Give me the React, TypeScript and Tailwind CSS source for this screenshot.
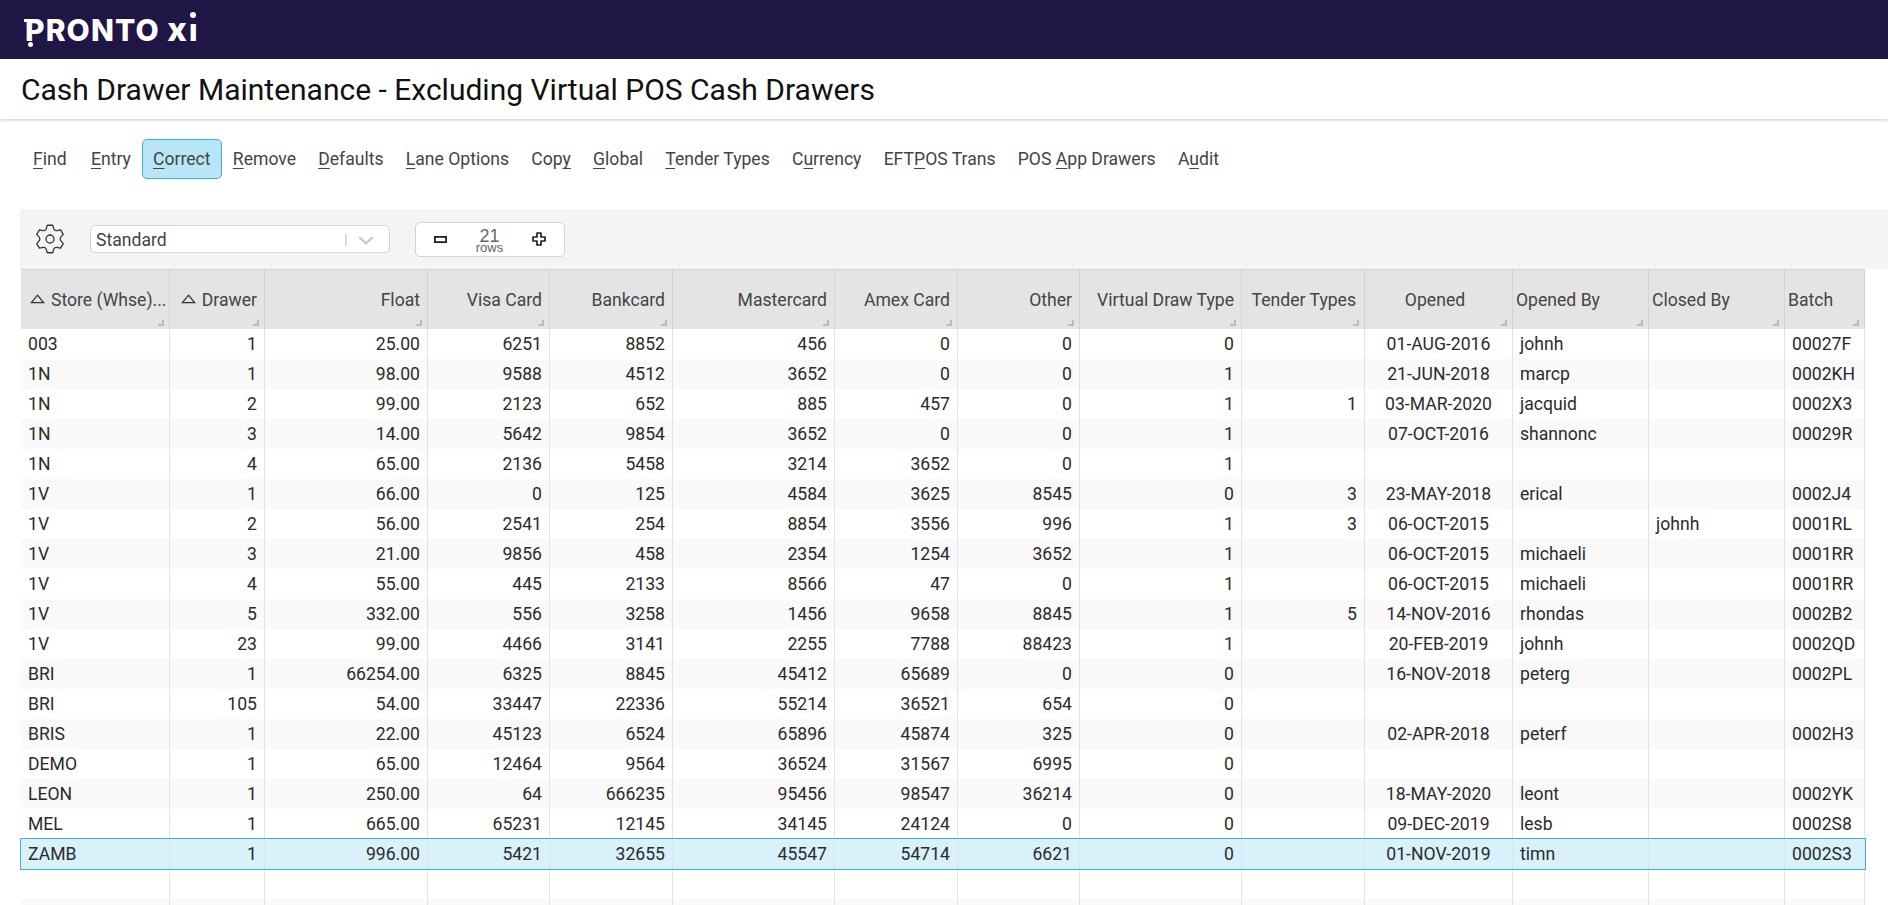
import React from "react";

const actions: [string, string, string][] = [
  ["", "F", "ind"], ["", "E", "ntry"], ["", "C", "orrect"], ["", "R", "emove"], ["", "D", "efaults"],
  ["", "L", "ane Options"], ["Cop", "y", ""], ["", "G", "lobal"], ["", "T", "ender Types"], ["C", "u", "rrency"],
  ["EFT", "P", "OS Trans"], ["POS ", "A", "pp Drawers"], ["A", "u", "dit"],
];

type Col = { label: string; width: string; align: string; head: string; sort?: boolean };
const cols: Col[] = [
  { label: "Store (Whse)...", width: "w-[149px]", align: "text-left pl-[7px] pr-[7px]", head: "justify-start pl-[9px]", sort: true },
  { label: "Drawer", width: "w-[95px]", align: "text-right pr-[7px]", head: "justify-end pr-[7px]", sort: true },
  { label: "Float", width: "w-[163px]", align: "text-right pr-[7px]", head: "justify-end pr-[7px]" },
  { label: "Visa Card", width: "w-[122px]", align: "text-right pr-[7px]", head: "justify-end pr-[7px]" },
  { label: "Bankcard", width: "w-[123px]", align: "text-right pr-[7px]", head: "justify-end pr-[7px]" },
  { label: "Mastercard", width: "w-[162px]", align: "text-right pr-[7px]", head: "justify-end pr-[7px]" },
  { label: "Amex Card", width: "w-[123px]", align: "text-right pr-[7px]", head: "justify-end pr-[7px]" },
  { label: "Other", width: "w-[122px]", align: "text-right pr-[7px]", head: "justify-end pr-[7px]" },
  { label: "Virtual Draw Type", width: "w-[162px]", align: "text-right pr-[7px]", head: "justify-end pr-[7px]" },
  { label: "Tender Types", width: "w-[123px]", align: "text-right pr-[7px]", head: "justify-end pr-[8px]" },
  { label: "Opened", width: "w-[148px]", align: "text-center", head: "justify-center pr-[7px]" },
  { label: "Opened By", width: "w-[136px]", align: "text-left pl-[7px]", head: "justify-start pl-[3px]" },
  { label: "Closed By", width: "w-[136px]", align: "text-left pl-[7px]", head: "justify-start pl-[3px]" },
  { label: "Batch", width: "w-[80px]", align: "text-left pl-[7px]", head: "justify-start pl-[3px]" },
];

const rows: string[][] = [
  ["003", "1", "25.00", "6251", "8852", "456", "0", "0", "0", "", "01-AUG-2016", "johnh", "", "00027F"],
  ["1N", "1", "98.00", "9588", "4512", "3652", "0", "0", "1", "", "21-JUN-2018", "marcp", "", "0002KH"],
  ["1N", "2", "99.00", "2123", "652", "885", "457", "0", "1", "1", "03-MAR-2020", "jacquid", "", "0002X3"],
  ["1N", "3", "14.00", "5642", "9854", "3652", "0", "0", "1", "", "07-OCT-2016", "shannonc", "", "00029R"],
  ["1N", "4", "65.00", "2136", "5458", "3214", "3652", "0", "1", "", "", "", "", ""],
  ["1V", "1", "66.00", "0", "125", "4584", "3625", "8545", "0", "3", "23-MAY-2018", "erical", "", "0002J4"],
  ["1V", "2", "56.00", "2541", "254", "8854", "3556", "996", "1", "3", "06-OCT-2015", "", "johnh", "0001RL"],
  ["1V", "3", "21.00", "9856", "458", "2354", "1254", "3652", "1", "", "06-OCT-2015", "michaeli", "", "0001RR"],
  ["1V", "4", "55.00", "445", "2133", "8566", "47", "0", "1", "", "06-OCT-2015", "michaeli", "", "0001RR"],
  ["1V", "5", "332.00", "556", "3258", "1456", "9658", "8845", "1", "5", "14-NOV-2016", "rhondas", "", "0002B2"],
  ["1V", "23", "99.00", "4466", "3141", "2255", "7788", "88423", "1", "", "20-FEB-2019", "johnh", "", "0002QD"],
  ["BRI", "1", "66254.00", "6325", "8845", "45412", "65689", "0", "0", "", "16-NOV-2018", "peterg", "", "0002PL"],
  ["BRI", "105", "54.00", "33447", "22336", "55214", "36521", "654", "0", "", "", "", "", ""],
  ["BRIS", "1", "22.00", "45123", "6524", "65896", "45874", "325", "0", "", "02-APR-2018", "peterf", "", "0002H3"],
  ["DEMO", "1", "65.00", "12464", "9564", "36524", "31567", "6995", "0", "", "", "", "", ""],
  ["LEON", "1", "250.00", "64", "666235", "95456", "98547", "36214", "0", "", "18-MAY-2020", "leont", "", "0002YK"],
  ["MEL", "1", "665.00", "65231", "12145", "34145", "24124", "0", "0", "", "09-DEC-2019", "lesb", "", "0002S8"],
  ["ZAMB", "1", "996.00", "5421", "32655", "45547", "54714", "6621", "0", "", "01-NOV-2019", "timn", "", "0002S3"],
  ["", "", "", "", "", "", "", "", "", "", "", "", "", ""],
  ["", "", "", "", "", "", "", "", "", "", "", "", "", ""],
];

function gearPath(): string {
  const c = 16;
  const pt = (deg: number, r: number) => {
    const a = (deg * Math.PI) / 180;
    return `${(c + r * Math.cos(a)).toFixed(2)} ${(c + r * Math.sin(a)).toFixed(2)}`;
  };
  let d = "";
  for (let k = 0; k < 6; k++) {
    const a = -90 + 60 * k;
    d += `${k === 0 ? "M" : "L"}${pt(a - 21, 10.8)} L${pt(a - 11, 14)} L${pt(a + 11, 14)} L${pt(a + 21, 10.8)} `;
    d += `Q${pt(a + 30, 9.4)} ${pt(a + 39, 10.8)} `;
  }
  return d + "Z";
}

function Logo() {
  return (
    <div className="relative ml-[25px] flex h-[59px] items-center">
      <span className="whitespace-nowrap font-['Inter',sans-serif] text-[30px] font-extrabold leading-none tracking-[1.1px] text-white">
        PRONTO <span className="text-[33px]">x</span>
        <span className="relative ml-[1px] inline-block">
          i
          <span className="absolute left-0 top-[2px] h-[6px] w-[9px] bg-[#1f1646]" />
          <span className="absolute left-[1px] top-[-3px] h-[6px] w-[6px] rounded-full bg-white" />
        </span>
      </span>
      <span className="absolute left-[-1px] top-[19px] h-[3px] w-[5px] bg-white" />
      <span className="absolute left-[3px] top-[42px] h-[5px] w-[5px] rounded-full bg-white" />
    </div>
  );
}

function Grip() {
  return (
    <svg className="absolute bottom-[3px] right-[5px]" width="6" height="6" viewBox="0 0 6 6">
      <path d="M5 0v5H0" fill="none" stroke="#b0b0b0" strokeWidth="1.6" />
    </svg>
  );
}

function SortUp() {
  return (
    <svg width="15" height="10" viewBox="0 0 15 10" className="mr-[6px] mb-[3px] shrink-0">
      <path d="M7.5 1.2 13.6 8.6H1.4Z" fill="none" stroke="#333" strokeWidth="1.3" />
    </svg>
  );
}

export default function App() {
  return (
    <div className="h-[905px] w-full overflow-hidden bg-white font-['Roboto',sans-serif]">
      <header className="h-[59px] bg-[#1f1646]">
        <Logo />
      </header>
      <div className="relative h-[60px] px-[21px] shadow-[0_1px_3px_rgba(0,0,0,0.22)]">
        <h1 className="text-[30px] font-normal leading-[61px] text-[#111]">Cash Drawer Maintenance - Excluding Virtual POS Cash Drawers</h1>
      </div>
      <nav className="flex h-[90px] items-start pl-[22px] pt-[20px]">
        {actions.map(([a, b, c], i) => (
          <button
            key={i}
            className={
              i === 2
                ? "h-[40px] whitespace-nowrap rounded-[5px] border border-[#3fb0d3] bg-[#b9e6f6] px-[10.1px] pt-[1px] text-[17.6px] text-[#444]"
                : i === 0
                  ? "mr-[2px] h-[40px] whitespace-nowrap rounded-[5px] border border-transparent px-[10.1px] pt-[1px] text-[17.6px] text-[#444]"
                  : "h-[40px] whitespace-nowrap rounded-[5px] border border-transparent px-[10.1px] pt-[1px] text-[17.6px] text-[#444]"
            }
          >
            {a}
            <span className="underline underline-offset-[3px]">{b}</span>
            {c}
          </button>
        ))}
      </nav>
      <div className="ml-[20px] flex h-[60px] items-center bg-[#f4f4f4]">
        <svg className="ml-[14px]" width="32" height="32" viewBox="0 0 32 32">
          <path d={gearPath()} fill="none" stroke="#333" strokeWidth="1.3" strokeLinejoin="round" />
          <circle cx="16" cy="16" r="4" fill="none" stroke="#333" strokeWidth="1.3" />
        </svg>
        <div className="ml-[24px] flex h-[28px] w-[300px] items-center justify-between rounded-[5px] border border-[#d4d4d4] bg-white pl-[5px] pr-[15px] pt-[2px] text-[17.6px] text-[#444]">
          <span>Standard</span>
          <span className="flex items-center">
            <span className="mr-[11px] h-[12px] w-[2px] bg-[#ddd]" />
            <svg width="16" height="9" viewBox="0 0 16 9">
              <path d="M1.2 1.2 8 7.4l6.8-6.2" fill="none" stroke="#ccc" strokeWidth="2.4" />
            </svg>
          </span>
        </div>
        <div className="ml-[25px] flex h-[35px] w-[150px] items-center justify-between rounded-[5px] border border-[#d4d4d4] bg-white px-[18px]">
          <svg width="13" height="7" viewBox="0 0 13 7"><rect x="0.9" y="0.9" width="11.2" height="5.2" fill="none" stroke="#222" strokeWidth="1.8" /></svg>
          <div className="flex flex-col items-center font-['Liberation_Sans',sans-serif] text-[#666]">
            <span className="mt-[4px] text-[18px] leading-[15px]">21</span>
            <span className="-mt-[2px] text-[13px] leading-[11px]">rows</span>
          </div>
          <svg width="14" height="14" viewBox="0 0 14 14"><path d="M5 1h4v4h4v4H9v4H5V9H1V5h4Z" fill="none" stroke="#222" strokeWidth="1.7" strokeLinejoin="round" /></svg>
        </div>
      </div>
      <table className="ml-[21px] w-[1844px] table-fixed border-separate border-spacing-0 text-[17.6px] text-[#2b2b2b]">
        <thead>
          <tr className="h-[60px]">
            {cols.map((c) => (
              <th key={c.label} className={`${c.width} relative border-r border-t border-[#d4d4d4] bg-[#e4e4e4] p-0 font-normal`}>
                <div className={`flex h-[59px] items-center whitespace-nowrap pt-[2px] text-[#444] ${c.head}`}>
                  {c.sort && <SortUp />}
                  {c.label}
                </div>
                <Grip />
              </th>
            ))}
          </tr>
        </thead>
        <tbody>
          {rows.map((r, i) => {
            const selected = i === 17;
            const rowCls = selected
              ? "h-[30px] bg-[#d8f1fa] outline outline-1 outline-[#3fb0d3]"
              : i % 2 === 1
                ? "h-[30px] bg-[#f9f9f9]"
                : "h-[30px] bg-white";
            return (
              <tr key={i} className={rowCls}>
                {r.map((v, j) => (
                  <td key={j} className={`${cols[j].align} overflow-hidden whitespace-nowrap border-r border-[#e0e4e6] p-0`}>
                    {v}
                  </td>
                ))}
              </tr>
            );
          })}
        </tbody>
      </table>
    </div>
  );
}
